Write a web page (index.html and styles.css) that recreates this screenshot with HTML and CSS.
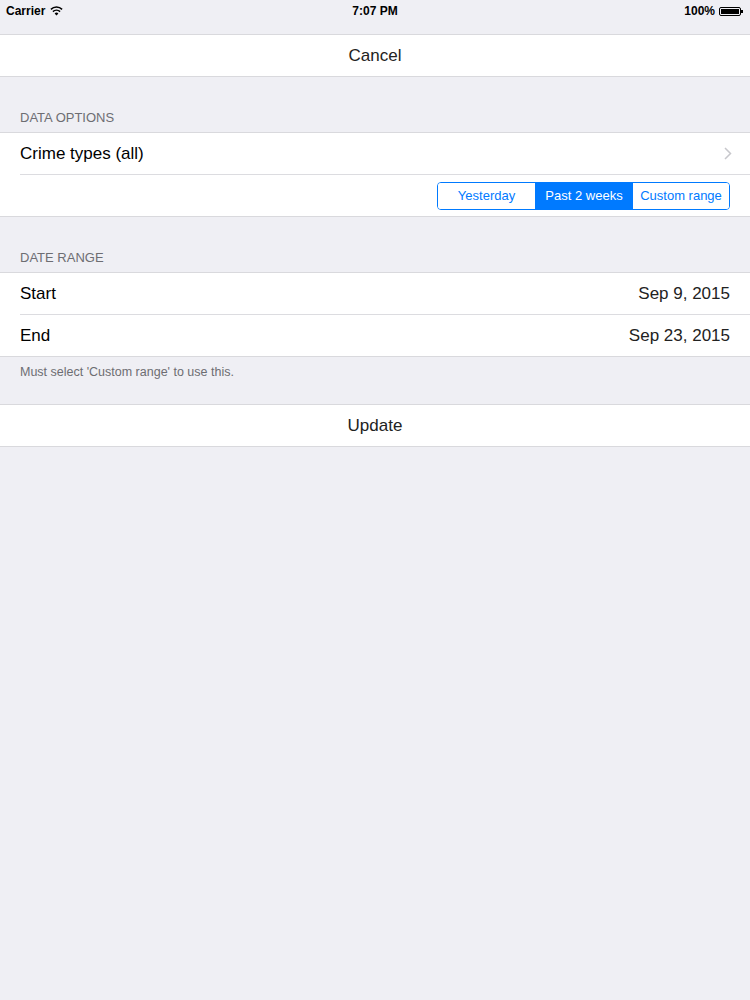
FILE: index.html
```html
<!DOCTYPE html>
<html lang="en">

<head>
    <meta charset="UTF-8">
    <meta name="viewport" content="width=device-width, initial-scale=1.0">
    <title>Filter</title>
    <link rel="stylesheet" href="styles.css">
</head>

<body>
    <div class="status-bar">
        <div class="status-left">
            <span>Carrier</span>
            <svg class="wifi" width="13" height="10" viewBox="0 0 13 10">
                <path d="M6.5 9.5 L4.6 7.4 A2.8 2.8 0 0 1 8.4 7.4 Z" fill="#000"/>
                <path d="M2.9 5.6 A5.2 5.2 0 0 1 10.1 5.6" stroke="#000" stroke-width="1.5" fill="none"/>
                <path d="M0.9 3.4 A8 8 0 0 1 12.1 3.4" stroke="#000" stroke-width="1.5" fill="none"/>
            </svg>
        </div>
        <div class="status-time">7:07 PM</div>
        <div class="status-right">
            <span>100%</span>
            <span class="battery"><span class="battery-fill"></span></span>
        </div>
    </div>

    <div class="group">
        <button class="row action">Cancel</button>
    </div>

    <div class="section-header">DATA OPTIONS</div>
    <div class="group">
        <div class="row">
            <span>Crime types (all)</span>
            <svg class="chevron" width="8" height="13" viewBox="0 0 8 13">
                <path d="M1 1 L6.5 6.5 L1 12" stroke="#c7c7cc" stroke-width="1.5" fill="none"/>
            </svg>
        </div>
        <div class="row segment-row">
            <div class="segmented">
                <button>Yesterday</button>
                <button class="selected">Past 2 weeks</button>
                <button>Custom range</button>
            </div>
        </div>
    </div>

    <div class="section-header">DATE RANGE</div>
    <div class="group">
        <div class="row">
            <span>Start</span>
            <span class="value">Sep 9, 2015</span>
        </div>
        <div class="row">
            <span>End</span>
            <span class="value">Sep 23, 2015</span>
        </div>
    </div>
    <div class="section-footer">Must select 'Custom range' to use this.</div>

    <div class="group">
        <button class="row action">Update</button>
    </div>
</body>

</html>
```

FILE: styles.css
```css
body {
    margin: 0;
    background: #efeff4;
    font-family: "Liberation Sans", Arial, sans-serif;
    color: #000;
}

.status-bar {
    height: 34px;
    display: flex;
    align-items: flex-start;
    justify-content: space-between;
    padding: 4px 6px 0;
    box-sizing: border-box;
    font-size: 12px;
    font-weight: bold;
}

.status-left,
.status-right {
    flex: 1;
    display: flex;
    align-items: center;
    gap: 5px;
}

.status-right {
    justify-content: flex-end;
    gap: 4px;
}

.wifi {
    margin-top: -1px;
}

.battery {
    position: relative;
    width: 22px;
    height: 9px;
    border: 1px solid #000;
    border-radius: 2px;
    padding: 1px;
    box-sizing: border-box;
    margin-right: 3px;
}

.battery::after {
    content: "";
    position: absolute;
    right: -3px;
    top: 2px;
    width: 2px;
    height: 3px;
    background: #000;
}

.battery-fill {
    display: block;
    height: 100%;
    background: #000;
}

.group {
    background: #fff;
    border-top: 1px solid #d9d9dd;
    border-bottom: 1px solid #d9d9dd;
}

.row {
    height: 41px;
    display: flex;
    align-items: center;
    justify-content: space-between;
    margin-left: 20px;
    padding-right: 20px;
    font-size: 17px;
    border-bottom: 1px solid #dcdce0;
}

.row:last-child {
    border-bottom: none;
}

button.row {
    width: 100%;
    margin: 0;
    padding: 0;
    justify-content: center;
    background: #fff;
    border: none;
    font-family: inherit;
    font-size: 17px;
    color: #222;
    cursor: pointer;
}

.chevron {
    margin-right: -2px;
}

.value {
    color: #222;
}

.section-header {
    font-size: 13px;
    color: #6d6d72;
    padding: 34px 20px 7px;
}

.group + .section-header {
    padding-top: 33px;
}

.section-footer {
    font-size: 12.5px;
    color: #6d6d72;
    padding: 8px 20px 25px;
}

.segment-row {
    justify-content: flex-end;
}

.segmented {
    display: flex;
    border: 1px solid #007aff;
    border-radius: 4px;
    overflow: hidden;
}

.segmented button {
    width: 97px;
    height: 26px;
    border: none;
    border-left: 1px solid #007aff;
    background: #fff;
    color: #007aff;
    font-family: inherit;
    font-size: 13px;
    padding: 0;
}

.segmented button:first-child {
    border-left: none;
}

.segmented .selected {
    background: #007aff;
    color: #fff;
}
```
